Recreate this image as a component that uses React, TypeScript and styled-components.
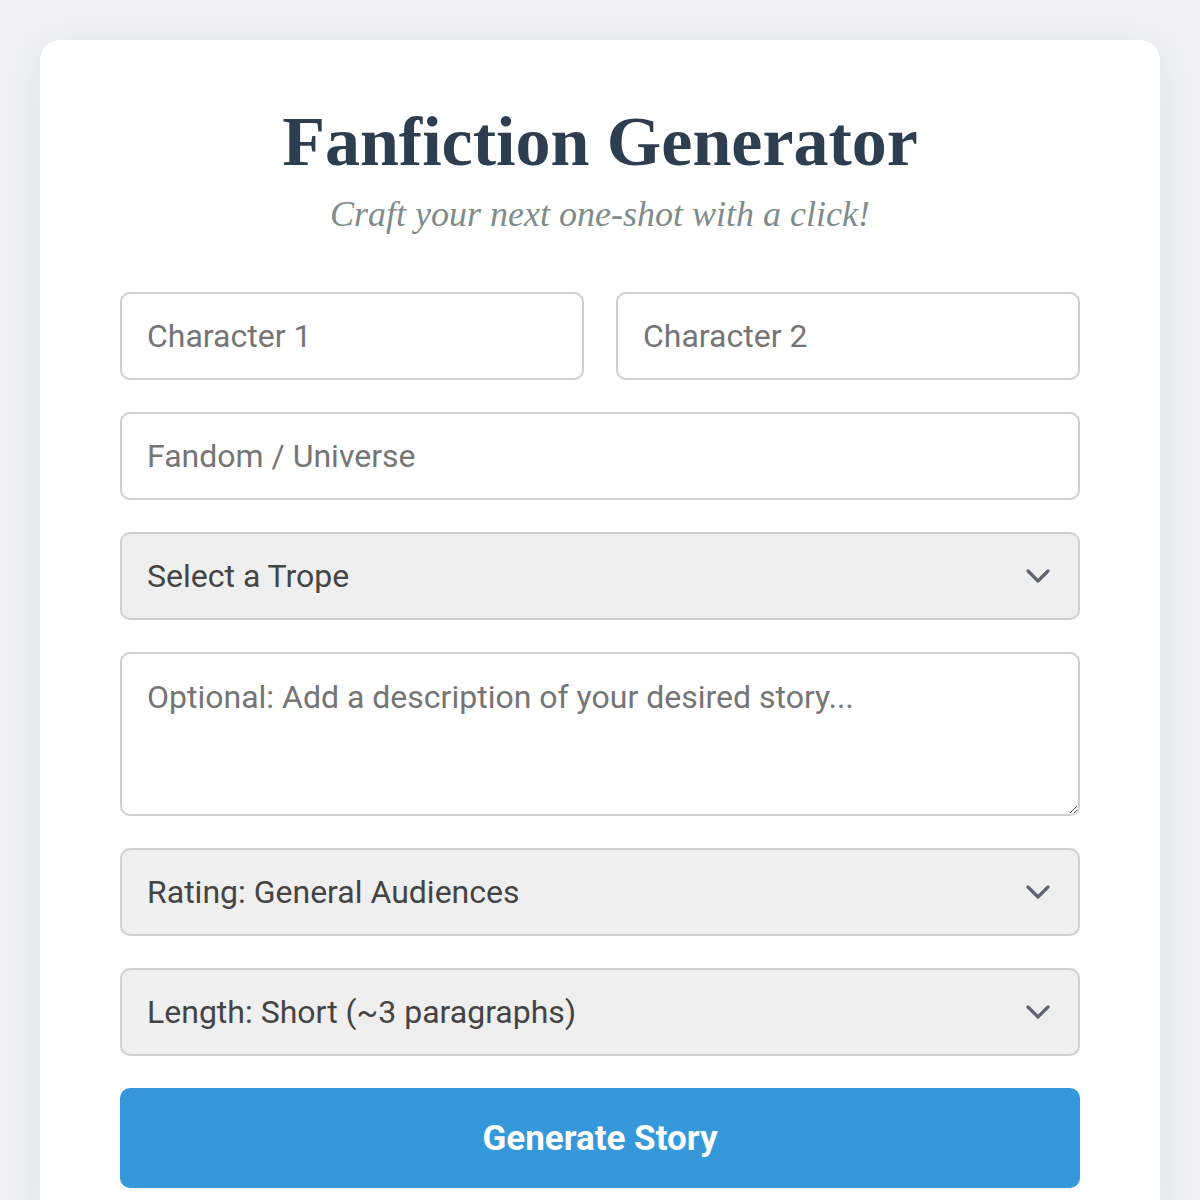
import React from "react";
import styled, { createGlobalStyle } from "styled-components";

const Global = createGlobalStyle`
  html, body { margin: 0; padding: 0; background: #eef2f5; }
  body { font-family: Roboto, "Liberation Sans", sans-serif; }
  * { box-sizing: border-box; }
`;

const Page = styled.div`
  padding: 40px;
  min-height: 1200px;
`;

const Card = styled.div`
  background: #fff;
  border-radius: 20px;
  box-shadow: 0 8px 40px rgba(40, 60, 80, 0.08);
  padding: 62px 80px 40px;
  display: flex;
  flex-direction: column;
`;

const Title = styled.h1`
  margin: 0;
  text-align: center;
  font-family: "Liberation Serif", "DejaVu Serif", serif;
  font-weight: 700;
  font-size: 70px;
  line-height: 80px;
  color: #2c3e50;
`;

const Subtitle = styled.p`
  margin: 10px 0 0;
  text-align: center;
  font-family: "Liberation Serif", "DejaVu Serif", serif;
  font-style: italic;
  font-size: 36px;
  line-height: 44px;
  color: #7f8c8d;
`;

const Form = styled.form`
  margin-top: 56px;
  display: flex;
  flex-direction: column;
  gap: 32px;
`;

const Row = styled.div`
  display: grid;
  grid-template-columns: 1fr 1fr;
  gap: 32px;
`;

const fieldBase = `
  width: 100%;
  border: 2px solid #cfcfcf;
  border-radius: 10px;
  font-family: Roboto, "Liberation Sans", sans-serif;
  font-size: 32px;
  padding: 0 25px;
  outline: none;
`;

const Input = styled.input`
  ${fieldBase}
  height: 88px;
  background: #fff;
  color: #333;
  &::placeholder { color: #757575; }
`;

const TextArea = styled.textarea`
  ${fieldBase}
  height: 164px;
  padding-top: 23px;
  line-height: 40px;
  background: #fff;
  color: #333;
  resize: vertical;
  &::placeholder { color: #757575; }
`;

const SelectWrap = styled.div`
  position: relative;
`;

const Select = styled.select`
  ${fieldBase}
  height: 88px;
  appearance: none;
  background: #efefef;
  color: #444;
`;

const Chevron = styled.svg`
  position: absolute;
  right: 29px;
  top: 50%;
  transform: translateY(-50%);
  pointer-events: none;
`;

const Button = styled.button`
  height: 100px;
  border: none;
  border-radius: 10px;
  background: #3498db;
  color: #fff;
  font-family: Roboto, "Liberation Sans", sans-serif;
  font-weight: 700;
  font-size: 35px;
  cursor: pointer;
`;

const ChevronIcon = () => (
  <Chevron width="26" height="16" viewBox="0 0 26 16" fill="none">
    <path d="M3 3l10 10 10-10" stroke="#5f6472" strokeWidth="3.2" strokeLinecap="round" strokeLinejoin="round" />
  </Chevron>
);

const DropDown = ({ options }: { options: string[] }) => (
  <SelectWrap>
    <Select defaultValue={options[0]}>
      {options.map((o) => (
        <option key={o}>{o}</option>
      ))}
    </Select>
    <ChevronIcon />
  </SelectWrap>
);

export default function App() {
  return (
    <>
      <Global />
      <Page>
        <Card>
          <Title>Fanfiction Generator</Title>
          <Subtitle>Craft your next one-shot with a click!</Subtitle>
          <Form onSubmit={(e) => e.preventDefault()}>
            <Row>
              <Input placeholder="Character 1" />
              <Input placeholder="Character 2" />
            </Row>
            <Input placeholder="Fandom / Universe" />
            <DropDown options={["Select a Trope", "Enemies to Lovers", "Friends to Lovers", "Fake Dating", "Hurt/Comfort"]} />
            <TextArea placeholder="Optional: Add a description of your desired story..." />
            <DropDown options={["Rating: General Audiences", "Rating: Teen", "Rating: Mature"]} />
            <DropDown options={["Length: Short (~3 paragraphs)", "Length: Medium", "Length: Long"]} />
            <Button type="submit">Generate Story</Button>
          </Form>
        </Card>
      </Page>
    </>
  );
}
